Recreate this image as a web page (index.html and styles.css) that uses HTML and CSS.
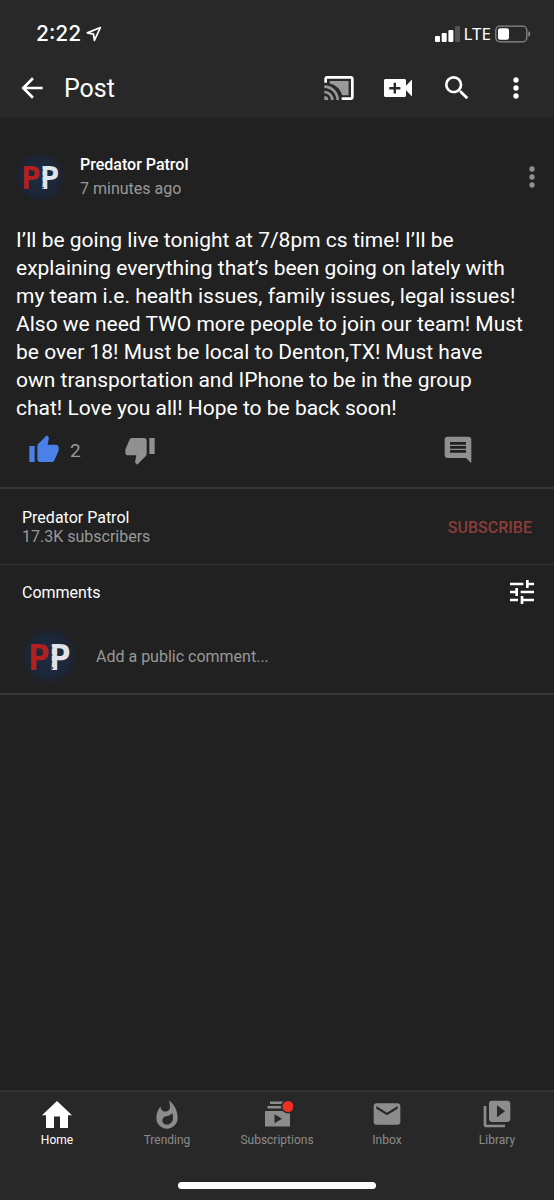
FILE: index.html
```html
<!DOCTYPE html>
<html lang="en">
<head>
<meta charset="utf-8">
<meta name="viewport" content="width=device-width, initial-scale=1">
<title>Post</title>
<link rel="stylesheet" href="styles.css">
</head>
<body>
<div class="app">
  <header class="top">
    <div class="status">
      <div class="clock">
        <span>2:22</span>
        <svg class="locate" viewBox="0 0 16 16" aria-hidden="true"><path d="M14.4 1.5 1.3 6.9l6.2 1.2.9 6.2z" fill="none" stroke="currentColor" stroke-width="1.7" stroke-linejoin="round"/></svg>
      </div>
      <div class="signals">
        <svg class="bars" viewBox="0 0 25 16" aria-hidden="true"><rect x="0" y="10" width="5" height="6" rx="1"/><rect x="6.7" y="7" width="5" height="9" rx="1"/><rect x="13.4" y="4" width="5" height="12" rx="1"/><rect x="20" y="0" width="5" height="16" rx="1" fill="#555"/></svg>
        <span class="network">LTE</span>
        <svg class="battery" viewBox="0 0 36 18" aria-hidden="true"><rect x=".8" y="1.2" width="31" height="15.6" rx="4" fill="none" stroke="#8a8a8a" stroke-width="1.3"/><rect x="3" y="3.2" width="11" height="11.6" rx="2"/><path d="M33.3 6.3c2.6.8 2.6 4.600 0 5.400z" fill="#8a8a8a"/></svg>
      </div>
    </div>
    <div class="bar">
      <button class="icon-btn" aria-label="Back"><svg viewBox="0 0 24 24"><path d="M20 11H7.830l5.590-5.590L12 4l-8 8 8 8 1.410-1.410L7.830 13H20v-2z"/></svg></button>
      <h1 class="title">Post</h1>
      <div class="tools">
        <button class="icon-btn" aria-label="Cast"><svg viewBox="0 0 24 24"><path fill="#999" d="M5 6.700h14.200v10.800h-4.800A13 13 0 0 0 5 8.600zM1 18v3h3a3 3 0 0 0-3-3zm0-4v2a5 5 0 0 1 5 5h2a7 7 0 0 0-7-7zm0-4v2a9 9 0 0 1 9 9h2A11 11 0 0 0 1 10z"/><path d="M21 3H3c-1.100 0-2 .9-2 2v3h2V5h18v14h-7v2h7c1.100 0 2-.9 2-2V5c0-1.100-.9-2-2-2z"/></svg></button>
        <button class="icon-btn" aria-label="Create video"><svg viewBox="0 0 32 32"><path fill-rule="evenodd" d="M3.500 7h19c.9 0 1.500.6 1.500 1.500v5.200l6-6.200v17l-6-6.200v5.200c0 .9-.6 1.500-1.500 1.500h-19c-.9 0-1.500-.6-1.500-1.500v-15C2 7.600 2.600 7 3.500 7zM11.600 10.800v4.200H7.200v2.400h4.400v4.200H14v-4.200h4.400V15H14v-4.200z"/></svg></button>
        <button class="icon-btn" aria-label="Search"><svg viewBox="0 0 24 24"><path d="M15.500 14h-.79l-.28-.27A6.471 6.471 0 0 0 16 9.500 6.500 6.500 0 1 0 9.500 16c1.610 0 3.090-.59 4.230-1.570l.27.28v.79l5 4.990L20.490 19l-4.990-5zm-6 0C7.010 14 5 11.990 5 9.500S7.010 5 9.500 5 14 7.010 14 9.500 11.990 14 9.500 14z"/></svg></button>
        <button class="icon-btn" aria-label="More"><svg viewBox="0 0 24 24"><circle cx="12" cy="6" r="2"/><circle cx="12" cy="12" r="2"/><circle cx="12" cy="18" r="2"/></svg></button>
      </div>
    </div>
  </header>

  <main class="content">
    <article class="post">
      <div class="author">
        <svg class="avatar" viewBox="0 0 54 54" role="img" aria-label="Predator Patrol"><use href="#logo"/></svg>
        <div class="byline">
          <span class="name">Predator Patrol</span>
          <span class="time">7 minutes ago</span>
        </div>
        <button class="icon-btn muted" aria-label="Post options"><svg viewBox="0 0 24 24"><circle cx="12" cy="6" r="2"/><circle cx="12" cy="12" r="2"/><circle cx="12" cy="18" r="2"/></svg></button>
      </div>
      <p class="text">I’ll be going live tonight at 7/8pm cs time! I’ll be<br>
        explaining everything that’s been going on lately with<br>
        my team i.e. health issues, family issues, legal issues!<br>
        Also we need TWO more people to join our team! Must<br>
        be over 18! Must be local to Denton,TX! Must have<br>
        own transportation and IPhone to be in the group<br>
        chat! Love you all! Hope to be back soon!</p>
      <div class="actions">
        <button class="icon-btn liked" aria-label="Like"><svg viewBox="0 0 24 24"><path d="M1 21h4V9H1v12zm22-11c0-1.100-.9-2-2-2h-6.310l.95-4.570.03-.32c0-.41-.17-.79-.44-1.060L14.170 1 7.590 7.590C7.220 7.950 7 8.450 7 9v10c0 1.100.9 2 2 2h9c.83 0 1.540-.5 1.840-1.220l3.020-7.050c.09-.23.14-.47.14-.73v-2z"/></svg></button>
        <span class="count">2</span>
        <button class="icon-btn muted" aria-label="Dislike"><svg viewBox="0 0 24 24"><path d="M15 3H6c-.83 0-1.540.5-1.840 1.220l-3.020 7.050c-.09.23-.14.47-.14.73v2c0 1.100.9 2 2 2h6.310l-.95 4.570-.03.32c0 .41.17.79.44 1.060L9.830 23l6.590-6.590c.36-.36.58-.86.58-1.410V5c0-1.100-.9-2-2-2zm4 0v12h4V3h-4z"/></svg></button>
        <button class="icon-btn muted reply" aria-label="Comment"><svg viewBox="0 0 24 24"><path d="M21.990 4c0-1.100-.89-2-1.990-2H4c-1.100 0-2 .9-2 2v12c0 1.100.9 2 2 2h14l4 4-.01-18zM18 14H6v-2h12v2zm0-3H6V9h12v2zm0-3H6V6h12v2z"/></svg></button>
      </div>
    </article>

    <section class="channel">
      <div class="channel-info">
        <span>Predator Patrol</span>
        <span class="subs">17.3K subscribers</span>
      </div>
      <button class="subscribe">SUBSCRIBE</button>
    </section>

    <section class="comments">
      <div class="comments-head">
        <h2 class="comments-title">Comments</h2>
        <button class="icon-btn" aria-label="Sort comments"><svg viewBox="0 0 24 24"><path d="M3 17v2h6v-2H3zM3 5v2h10V5H3zm10 16v-2h8v-2h-8v-2h-2v6h2zM7 9v2H3v2h4v2h2V9H7zm14 4v-2H11v2h10zm-6-4h2V7h4V5h-4V3h-2v6z"/></svg></button>
      </div>
      <div class="add">
        <svg class="avatar large" viewBox="0 0 54 54" aria-hidden="true">
          <defs>
            <radialGradient id="disc"><stop offset="0" stop-color="#1f2b40"/><stop offset=".75" stop-color="#1c2639"/><stop offset="1" stop-color="#1e222a"/></radialGradient>
            <g id="logo"><circle cx="27" cy="27" r="27" fill="url(#disc)"/><text class="logo-p" x="6" y="41" fill="#b2201f">P</text><text class="logo-p" x="27" y="41" fill="#e1e3ea">P</text><path d="M29 18l2 1-2 1zM29 25l2 1-2 1zM29 33l2-1-2 3zM30 38l2 1-2 1z" fill="#1f2b40"/></g>
          </defs>
          <use href="#logo"/>
        </svg>
        <input class="field" type="text" aria-label="Add a public comment" placeholder="Add a public comment...">
      </div>
    </section>
  </main>

  <footer class="bottom">
    <nav class="tabs">
      <a class="tab active" href="#home"><svg viewBox="0 0 32 32"><path d="M16 3 1 17.200h4V30h8V18.500h6V30h8V17.200h4z"/></svg>Home</a>
      <a class="tab" href="#trending"><svg viewBox="0 0 24 24"><path transform="translate(0 1)" d="M13.500.67s.74 2.650.74 4.800c0 2.060-1.350 3.730-3.410 3.730-2.070 0-3.630-1.670-3.630-3.730l.03-.36C5.210 7.510 4 10.620 4 14c0 4.420 3.580 8 8 8s8-3.580 8-8C20 8.610 17.410 3.800 13.500.67zM11.710 19c-1.780 0-3.220-1.400-3.220-3.140 0-1.620 1.050-2.760 2.810-3.120 1.770-.36 3.600-1.210 4.620-2.580.39 1.290.59 2.650.59 4.040 0 2.650-2.150 4.800-4.800 4.800z"/></svg>Trending</a>
      <a class="tab" href="#subscriptions"><svg viewBox="0 0 32 32"><path fill-rule="evenodd" d="M9 3.500h14v2.400H9zM6.500 8h19v2.600h-19zM4 13h25v15.500H4zM13.500 16.200v9l7.500-4.500z"/><circle cx="27" cy="8.500" r="7" fill="#282828"/><circle cx="27" cy="8.500" r="5.500" fill="#ee3124"/></svg>Subscriptions</a>
      <a class="tab" href="#inbox"><svg viewBox="0 0 24 24"><path d="M20 4H4c-1.100 0-1.990.9-1.990 2L2 18c0 1.100.9 2 2 2h16c1.100 0 2-.9 2-2V6c0-1.100-.9-2-2-2zm0 4l-8 5-8-5V6l8 5 8-5v2z"/></svg>Inbox</a>
      <a class="tab" href="#library"><svg viewBox="0 0 24 24"><path d="M4 6H2v14c0 1.100.9 2 2 2h14v-2H4V6zm16-4H8c-1.100 0-2 .9-2 2v12c0 1.100.9 2 2 2h12c1.100 0 2-.9 2-2V4c0-1.100-.9-2-2-2zm-8 12.500v-9l6 4.500-6 4.500z"/></svg>Library</a>
    </nav>
    <div class="home-indicator"></div>
  </footer>
</div>
</body>
</html>
```
FILE: styles.css
```css
* { box-sizing: border-box; }

body {
  margin: 0;
  background: #212121;
  color: #fff;
  font-family: Roboto, "Liberation Sans", sans-serif;
  font-size: 16px;
}

svg { display: block; fill: currentColor; }

button {
  padding: 0;
  border: 0;
  background: none;
  color: inherit;
  font: inherit;
  cursor: pointer;
}

.app {
  display: flex;
  flex-direction: column;
  min-height: 100vh;
}

.top { background: #282828; }

.status {
  display: flex;
  justify-content: space-between;
  align-items: center;
  padding: 20px 23px 12px 36px;
  font-family: Inter, "Liberation Sans", sans-serif;
  line-height: 28px;
}

.clock, .signals { display: flex; align-items: center; }
.clock { gap: 5px; font-size: 21px; font-weight: 500; }
.signals { gap: 4px; font-size: 17px; font-family: "Noto Sans", "Liberation Sans", sans-serif; }
.locate { width: 16px; height: 16px; }
.bars { width: 25px; height: 16px; }
.battery { width: 36px; height: 18px; }

.bar {
  display: flex;
  align-items: center;
  padding: 12px 22px 14px 16px;
}

.icon-btn { flex: none; width: 32px; height: 32px; }
.icon-btn svg { width: 32px; height: 32px; }
.muted { color: #909090; }
.liked { color: #4a80e8; }

.title {
  margin: 0 0 0 16px;
  padding-top: 2px;
  font-size: 25px;
  font-weight: 400;
  line-height: 30px;
}

.tools { display: flex; gap: 27px; margin-left: auto; }

.content { flex: 1; }

.post {
  padding: 35px 16px 21px;
  border-bottom: 2px solid #363636;
}

.author { display: flex; align-items: center; margin-right: -10px; }
.avatar { flex: none; width: 48px; height: 48px; }
.avatar.large { width: 54px; height: 54px; }
.logo-p { font: 700 36px "DejaVu Sans Mono", monospace; }

.byline {
  display: flex;
  flex: 1;
  flex-direction: column;
  margin-left: 16px;
  line-height: 24px;
}
.name { font-weight: 500; }
.time { color: #999; }

.text {
  margin: 25px 0 12px;
  font-size: 21px;
  line-height: 28px;
}

.actions { display: flex; align-items: center; padding: 0 64px 0 12px; }
.count { width: 54px; margin-left: 10px; color: #999; font-size: 19px; }
.reply { margin-left: auto; }

.channel {
  display: flex;
  justify-content: space-between;
  align-items: center;
  padding: 19px 22px 18px;
  border-bottom: 1px solid #363636;
}
.channel-info { display: flex; flex-direction: column; line-height: 19px; }
.subs { color: #999; }
.subscribe { color: #8b3d3a; font-weight: 500; }

.comments { border-bottom: 2px solid #363636; }
.comments-head {
  display: flex;
  justify-content: space-between;
  align-items: center;
  padding: 11px 16px 11px 22px;
}
.comments-title { margin: 0; font-size: 16px; font-weight: 400; }

.add { display: flex; align-items: center; gap: 20px; padding: 10px 22px; }
.field {
  flex: 1;
  min-width: 0;
  padding: 0;
  border: 0;
  outline: 0;
  background: none;
  color: #fff;
  font: inherit;
}
.field::placeholder { color: #999; opacity: 1; }

.bottom {
  padding: 6px 2px 11px;
  border-top: 2px solid #333;
  background: #282828;
}
.tabs { display: grid; grid-template-columns: repeat(5, 1fr); }
.tab {
  display: flex;
  flex-direction: column;
  align-items: center;
  color: #8c8c8c;
  font-size: 12px;
  line-height: 20px;
  text-decoration: none;
}
.tab svg { width: 32px; height: 32px; }
.tab.active { color: #fff; }

.home-indicator {
  width: 36%;
  height: 7px;
  margin: 32px auto 0;
  border-radius: 4px;
  background: #fff;
}
```
